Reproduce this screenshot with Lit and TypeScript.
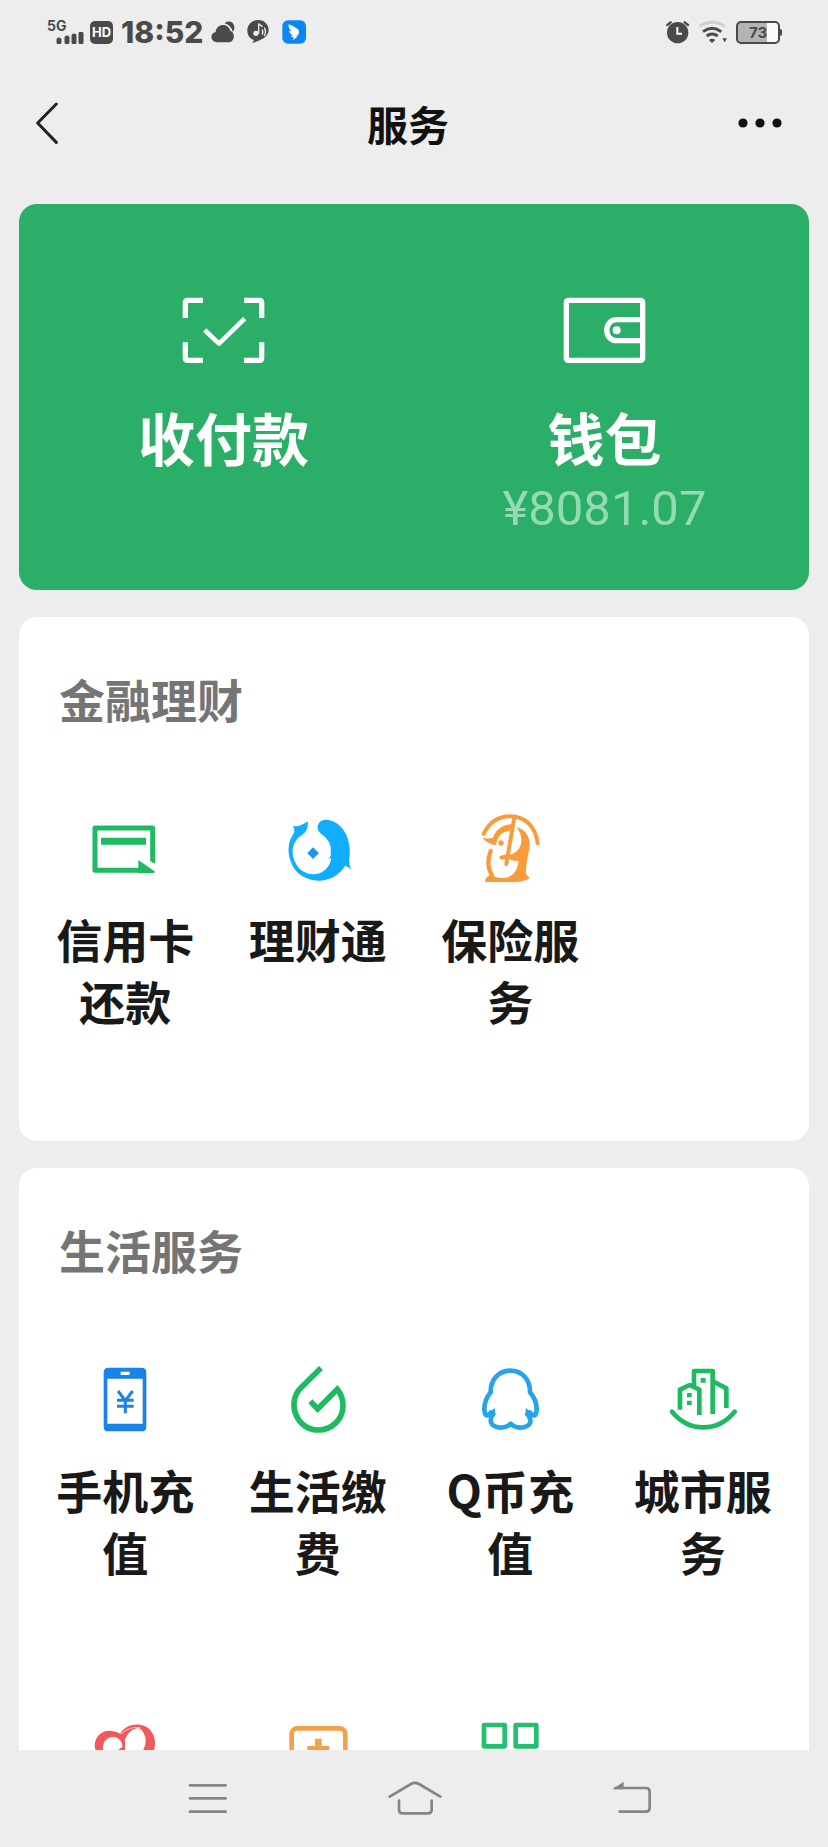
import { LitElement, html, css, svg, TemplateResult } from "lit";
import { customElement, property } from "lit/decorators.js";

interface Service {
  name: string;
  label: string;
  icon: TemplateResult;
}

const icon = (viewBox: string, body: unknown) =>
  html`<svg class="icon" viewBox=${viewBox} fill="none" aria-hidden="true">${body}</svg>`;

const creditCard = icon("148 460 216 216", svg`
  <path d="M339 610V505H166V632H300" stroke="#1dba62" stroke-width="15" stroke-linejoin="round"/>
  <path d="M184 534H319V555H184Z" fill="#1dba62"/>
  <path d="M296 601L347 636L342 640H296Z" fill="#1dba62"/>
  <path d="M328 602L350 616V624L328 609Z" fill="#fff"/>`);

const wealth = icon("725 460 216 216", svg`
  <path d="M758 498Q769 503 782 496Q795 492 802 485Q805 501 795 517Q785 527 774 534C755 552 752 582 764 606C774 630 795 643 820 644C848 643 869 623 873 595L864 598Q874 589 871 575C875 552 858 534 842 522C824 508 832 480 856 480C880 480 899 495 911 513C929 540 931 577 926 603Q927 619 933 630Q923 620 914 618C900 645 870 662 835 663C793 663 760 638 750 602C739 570 746 540 761 520Q764 510 758 498Z" fill="#12adff"/>
  <path d="M818 563L836 580L818 598L801 580Z" fill="#1899f0"/>`);

const insurance = icon("313 99 216 216", svg`
  <path d="M342 161C360 126 386 109 421 109C467 109 498 140 504 190" stroke="#f89b3c" stroke-width="12" stroke-linecap="round"/>
  <path d="M434 112L410 252" stroke="#f89b3c" stroke-width="12" stroke-linecap="round"/>
  <path d="M338 174Q358 177 370 173C377 150 397 134 425 133L423 152C399 153 384 166 379 196Q357 193 338 174Z" fill="#f89b3c"/>
  <circle cx="394" cy="189" r="8" fill="#f89b3c"/>
  <path d="M441 142C470 148 486 177 478 212C472 239 467 263 470 284L480 293Q472 303 440 306H347Q344 296 357 288L365 281Q374 294 400 294C428 294 446 270 446 243Q427 242 413 236Q397 242 389 234Q389 226 400 226Q406 221 416 226Q443 220 452 198C459 178 454 158 441 142Z" fill="#f89b3c"/>
  <path d="M363 213C353 238 355 266 367 287" stroke="#f89b3c" stroke-width="13" stroke-linecap="round"/>`);

const phone = icon("147 72 216 216", svg`
  <path fill-rule="evenodd" d="M205 83H305Q319 83 319 97V260Q319 274 305 274H205Q191 274 191 260V97Q191 83 205 83ZM202 116V251H308V116ZM242 95V105H269V95Z" fill="#1b82e8"/>
  <path d="M234 153L256 182L278 153M231 181H281M231 199H281M256 181V220" stroke="#1b82e8" stroke-width="9"/>`);

const utilities = icon("725 72 216 216", svg`
  <path d="M842 84L782 143C760 164 755 198 768 226C779 253 805 270 834 270C873 270 908 239 908 198Q908 169 891 148L832 207L810 184" stroke="#1dba62" stroke-width="17"/>`);

const qcoin = icon("163 72 216 216", svg`
  <path d="M272 92C235 92 212 121 213 157C201 171 194 187 194 208Q195 225 201 226Q207 226 214 217L221 222Q211 233 214 247C220 264 254 270 273 251C292 270 326 264 332 247Q334 233 323 222L330 217Q337 226 344 226Q350 225 351 208C351 187 343 171 331 157C332 121 309 92 272 92Z" stroke="#27a3ec" stroke-width="14" stroke-linejoin="round"/>
  <path d="M209 220L223 210V224ZM335 220L321 210V224Z" stroke="#27a3ec" stroke-width="6"/>`);

const city = icon("740 72 216 216", svg`
  <path d="M755 215Q794 262 849 262T943 215" stroke="#1dba62" stroke-width="14" stroke-linecap="round"/>
  <path d="M779 209V149L808 135L837 149V225M821 138V93H877V222M879 125L918 145V204" stroke="#1dba62" stroke-width="14" stroke-linejoin="round"/>
  <path d="M841 114H856V128H841ZM800 159H814V172H800ZM800 182H814V195H800Z" fill="#1dba62"/>`);

const charity = icon("88 75 216 216", svg`
  <path fill-rule="evenodd" d="M196 183Q198 210 218 226Q252 208 249 183Q266 155 252 129Q243 112 232 114Q205 122 196 148ZM182 131C192 112 215 102 240 104C270 107 287 133 286 164C284 204 243 243 195 264C146 243 107 207 105 165C107 137 128 121 151 122Q170 123 182 131ZM131 183C126 158 140 139 165 141Q185 144 189 170L176 179Q184 210 196 233Q147 213 131 183Z" fill="#f2575b"/>
  <path d="M184 133Q207 108 242 113" stroke="#fff" stroke-width="2"/>`);

const medical = icon("665 75 216 216", svg`
  <rect x="694" y="115" width="161" height="138" rx="17" stroke="#efa24a" stroke-width="14"/>
  <path d="M774 146V210M741 178H807" stroke="#efa24a" stroke-width="20"/>`);

const more = icon("1243 74 216 216", svg`
  <path d="M1273 104H1335V168H1273ZM1368 104H1430V168H1368ZM1273 199H1335V263H1273ZM1368 199H1430V263H1368Z" stroke="#25bf70" stroke-width="14" stroke-linejoin="round"/>`);

@customElement("status-bar")
export class StatusBar extends LitElement {
  static styles = css`
    :host { display: flex; justify-content: space-between; align-items: center; height: 64px; padding: 0 46px 0 47px; color: #4a4a4a; font-family: Inter, "Noto Sans", sans-serif; flex: none; }
    .group { display: flex; align-items: center; }
    .left { gap: 6px; }
    .right { gap: 8px; }
    .signal { display: flex; flex-direction: column; width: 37px; height: 24px; }
    .net { font-size: 14px; line-height: 12px; font-weight: 700; }
    .bars { align-self: flex-end; width: 28px; height: 12px; }
    .hd { display: grid; place-items: center; width: 23px; height: 23px; border-radius: 5px; background: #4a4a4a; color: #fff; font-size: 13px; font-weight: 700; }
    .time { padding: 0 2px; font-size: 30px; line-height: 32px; font-weight: 800; }
    .apps { display: flex; gap: 12px; }
    svg { display: block; }
    .battery { display: flex; align-items: center; }
    .cell { box-sizing: border-box; width: 44px; height: 23px; border: 2px solid #4a4a4a; border-radius: 5px; display: grid; place-items: center; font-size: 15px; line-height: 19px; font-weight: 700; background: linear-gradient(90deg, #b4b4b4 73%, #fafafa 73%); }
    .tip { width: 2px; height: 7px; background: #4a4a4a; border-radius: 0 2px 2px 0; }
  `;
  render() {
    return html`
      <div class="group left">
        <div class="signal">
          <span class="net">5G</span>
          <svg class="bars" viewBox="0 0 28 12" aria-hidden="true"><path d="M3 8V10M11 6V10M18 4V10M25 2V10" stroke="#4a4a4a" stroke-width="5" stroke-linecap="round"/></svg>
        </div>
        <span class="hd">HD</span>
        <span class="time">18:52</span>
        <div class="apps">
          <svg width="24" height="24" viewBox="546 62 72 72" fill="#4a4a4a" aria-hidden="true"><path d="M562 129C542 126 543 101 560 98C562 74 595 68 604 94C619 99 618 126 602 129Z"/><path d="M587 72C596 63 612 66 615 78C618 88 615 94 611 97Q606 78 587 72Z"/></svg>
          <svg width="23" height="24" viewBox="652 62 69 72" aria-hidden="true"><path d="M685 62C706 62 717 77 717 92C717 109 702 118 687 124L668 131L673 122C658 118 653 105 653 93C653 76 667 62 685 62Z" fill="#4a4a4a"/><path d="M687 72V102M687 74L699 82M697 91Q702 98 697 106M704 85Q711 98 704 110" stroke="#ededed" stroke-width="4" fill="none"/><circle cx="679" cy="102" r="8" fill="#ededed"/></svg>
          <svg width="24" height="24" viewBox="752 61 72 72" aria-hidden="true"><rect x="753" y="62" width="71" height="70" rx="17" fill="#0b86f5"/><path d="M772 74Q790 80 799 88Q806 94 801 105L795 109L798 111L785 122L787 112L778 111L783 107Q774 101 773 94L780 95Q770 86 772 74Z" fill="#fff"/></svg>
        </div>
      </div>
      <div class="group right">
        <svg width="24" height="24" viewBox="78 62 72 72" fill="none" aria-hidden="true"><circle cx="113" cy="100" r="32" fill="#4a4a4a"/><path d="M82 77L92 69M144 77L134 69" stroke="#4a4a4a" stroke-width="7" stroke-linecap="round"/><path d="M112 83V103H126" stroke="#fff" stroke-width="6"/></svg>
        <svg width="30" height="24" viewBox="172 62 90 72" fill="none" aria-hidden="true"><path d="M176 81Q214 57 253 81" stroke="#cfcfcf" stroke-width="9"/><path d="M187 97Q214 77 242 97M198 110Q214 98 231 110" stroke="#4a4a4a" stroke-width="9"/><path d="M205 122Q214 115 224 122L214 131ZM245 117H259L252 129Z" fill="#4a4a4a"/></svg>
        <div class="battery"><span class="cell">73</span><span class="tip"></span></div>
      </div>`;
  }
}

@customElement("service-card")
export class ServiceCard extends LitElement {
  @property() heading = "";
  @property({ attribute: false }) items: Service[] = [];
  static styles = css`
    :host { display: block; padding: 50px 10px 21px; border-radius: 18px; background: #fff; }
    h2 { margin: 0 0 40px; padding: 0 30px; color: #757575; font-size: 46px; line-height: 62px; font-weight: 700; }
    .grid { display: grid; grid-template-columns: repeat(4, 1fr); }
    .item { display: flex; flex-direction: column; align-items: center; gap: 22px; padding: 44px 24px 89px; border: 0; background: none; color: #191919; font: inherit; font-size: 46px; line-height: 62px; font-weight: 700; cursor: pointer; }
    .icon { display: block; width: 72px; height: 72px; }
  `;
  render() {
    return html`
      <h2>${this.heading}</h2>
      <div class="grid">
        ${this.items.map((s) => html`
          <button class="item" type="button" aria-label=${s.name}>
            ${s.icon}${s.label ? html`<span>${s.label}</span>` : null}
          </button>`)}
      </div>`;
  }
}

@customElement("app-root")
export class AppRoot extends LitElement {
  static styles = css`
    :host { display: flex; flex-direction: column; height: 100vh; background: #ededed; color: #111; font-family: "Noto Sans CJK SC", sans-serif; }
    button { border: 0; padding: 0; background: none; color: inherit; font: inherit; cursor: pointer; }
    svg { display: block; }
    .top { display: grid; grid-template-columns: 1fr auto 1fr; align-items: center; flex: none; height: 118px; padding: 0 44px 0 32px; }
    .top h1 { margin: 0; font-size: 41px; line-height: 60px; font-weight: 700; }
    .dots { justify-self: end; }
    .content { flex: 1; min-height: 0; overflow-y: auto; scrollbar-width: none; padding: 22px 19px 0; display: flex; flex-direction: column; gap: 27px; }
    .content > * { flex: none; }
    .pay { display: grid; grid-template-columns: 1fr 1fr; padding: 90px 14px 48px; border-radius: 18px; background: #2bae67; color: #fff; }
    .entry { display: flex; flex-direction: column; align-items: center; }
    .entry svg { width: 84px; height: 72px; }
    .name { margin-top: 30px; font-size: 57px; line-height: 80px; font-weight: 700; }
    .amount { font-family: Roboto, sans-serif; font-size: 49px; line-height: 66px; color: #95dab2; }
    .nav { display: flex; justify-content: space-between; align-items: center; flex: none; height: 97px; padding: 0 176px 0 188px; }
  `;
  finance: Service[] = [
    { name: "信用卡还款", label: "信用卡还款", icon: creditCard },
    { name: "理财通", label: "理财通", icon: wealth },
    { name: "保险服务", label: "保险服务", icon: insurance },
  ];
  life: Service[] = [
    { name: "手机充值", label: "手机充值", icon: phone },
    { name: "生活缴费", label: "生活缴费", icon: utilities },
    { name: "Q币充值", label: "Q币充值", icon: qcoin },
    { name: "城市服务", label: "城市服务", icon: city },
    { name: "公益", label: "", icon: charity },
    { name: "医疗", label: "", icon: medical },
    { name: "更多", label: "", icon: more },
  ];
  render() {
    return html`
      <status-bar></status-bar>
      <header class="top">
        <button type="button" aria-label="返回">
          <svg width="32" height="48" viewBox="6 296 96 144" fill="none"><path d="M79 311L23 368L79 426" stroke="#222" stroke-width="9" stroke-linecap="round" stroke-linejoin="round"/></svg>
        </button>
        <h1>服务</h1>
        <button class="dots" type="button" aria-label="更多操作">
          <svg width="48" height="24" viewBox="0 0 48 24" fill="#111"><circle cx="7" cy="12" r="4.6"/><circle cx="24" cy="12" r="4.6"/><circle cx="41" cy="12" r="4.6"/></svg>
        </button>
      </header>
      <main class="content">
        <section class="pay">
          <button class="entry" type="button">
            <svg viewBox="186 72 252 216" fill="none" stroke="#fff" stroke-width="16" aria-hidden="true"><path d="M249 91H203Q196 91 196 98V144M372 91H418Q425 91 425 98V144M196 217V264Q196 271 203 271H249M425 217V264Q425 271 418 271H372"/><path d="M254 180L297 221L374 146" stroke-width="14" stroke-linejoin="round"/></svg>
            <span class="name">收付款</span>
          </button>
          <button class="entry" type="button">
            <svg viewBox="249 72 252 216" fill="none" stroke="#fff" stroke-width="16" aria-hidden="true"><rect x="259" y="91" width="229" height="180" rx="6"/><path d="M488 149H411C370 149 370 212 411 212H488"/><circle cx="410" cy="181" r="12" fill="#fff" stroke="none"/></svg>
            <span class="name">钱包</span>
            <span class="amount">¥8081.07</span>
          </button>
        </section>
        <service-card heading="金融理财" .items=${this.finance}></service-card>
        <service-card heading="生活服务" .items=${this.life}></service-card>
      </main>
      <nav class="nav" aria-label="系统导航">
        <button type="button" aria-label="最近任务">
          <svg width="40" height="36" viewBox="384 273 120 108" fill="none"><path d="M390 286H497M390 325H497M390 365H497" stroke="#858585" stroke-width="8" stroke-linecap="round"/></svg>
        </button>
        <button type="button" aria-label="主屏幕">
          <svg width="64" height="36" viewBox="983 273 192 108" fill="none"><path d="M988 320L1052 282Q1064 275 1076 282L1140 320M1016 332V359Q1016 370 1027 370H1103Q1114 370 1114 359V332" stroke="#858585" stroke-width="8" stroke-linecap="round"/></svg>
        </button>
        <button type="button" aria-label="后退">
          <svg width="40" height="36" viewBox="155 273 120 108" fill="none"><path d="M165 294H257Q268 294 268 305V354Q268 365 257 365H178" stroke="#858585" stroke-width="8" stroke-linecap="round"/><path d="M156 298L190 275V298Z" fill="#858585"/></svg>
        </button>
      </nav>`;
  }
}
